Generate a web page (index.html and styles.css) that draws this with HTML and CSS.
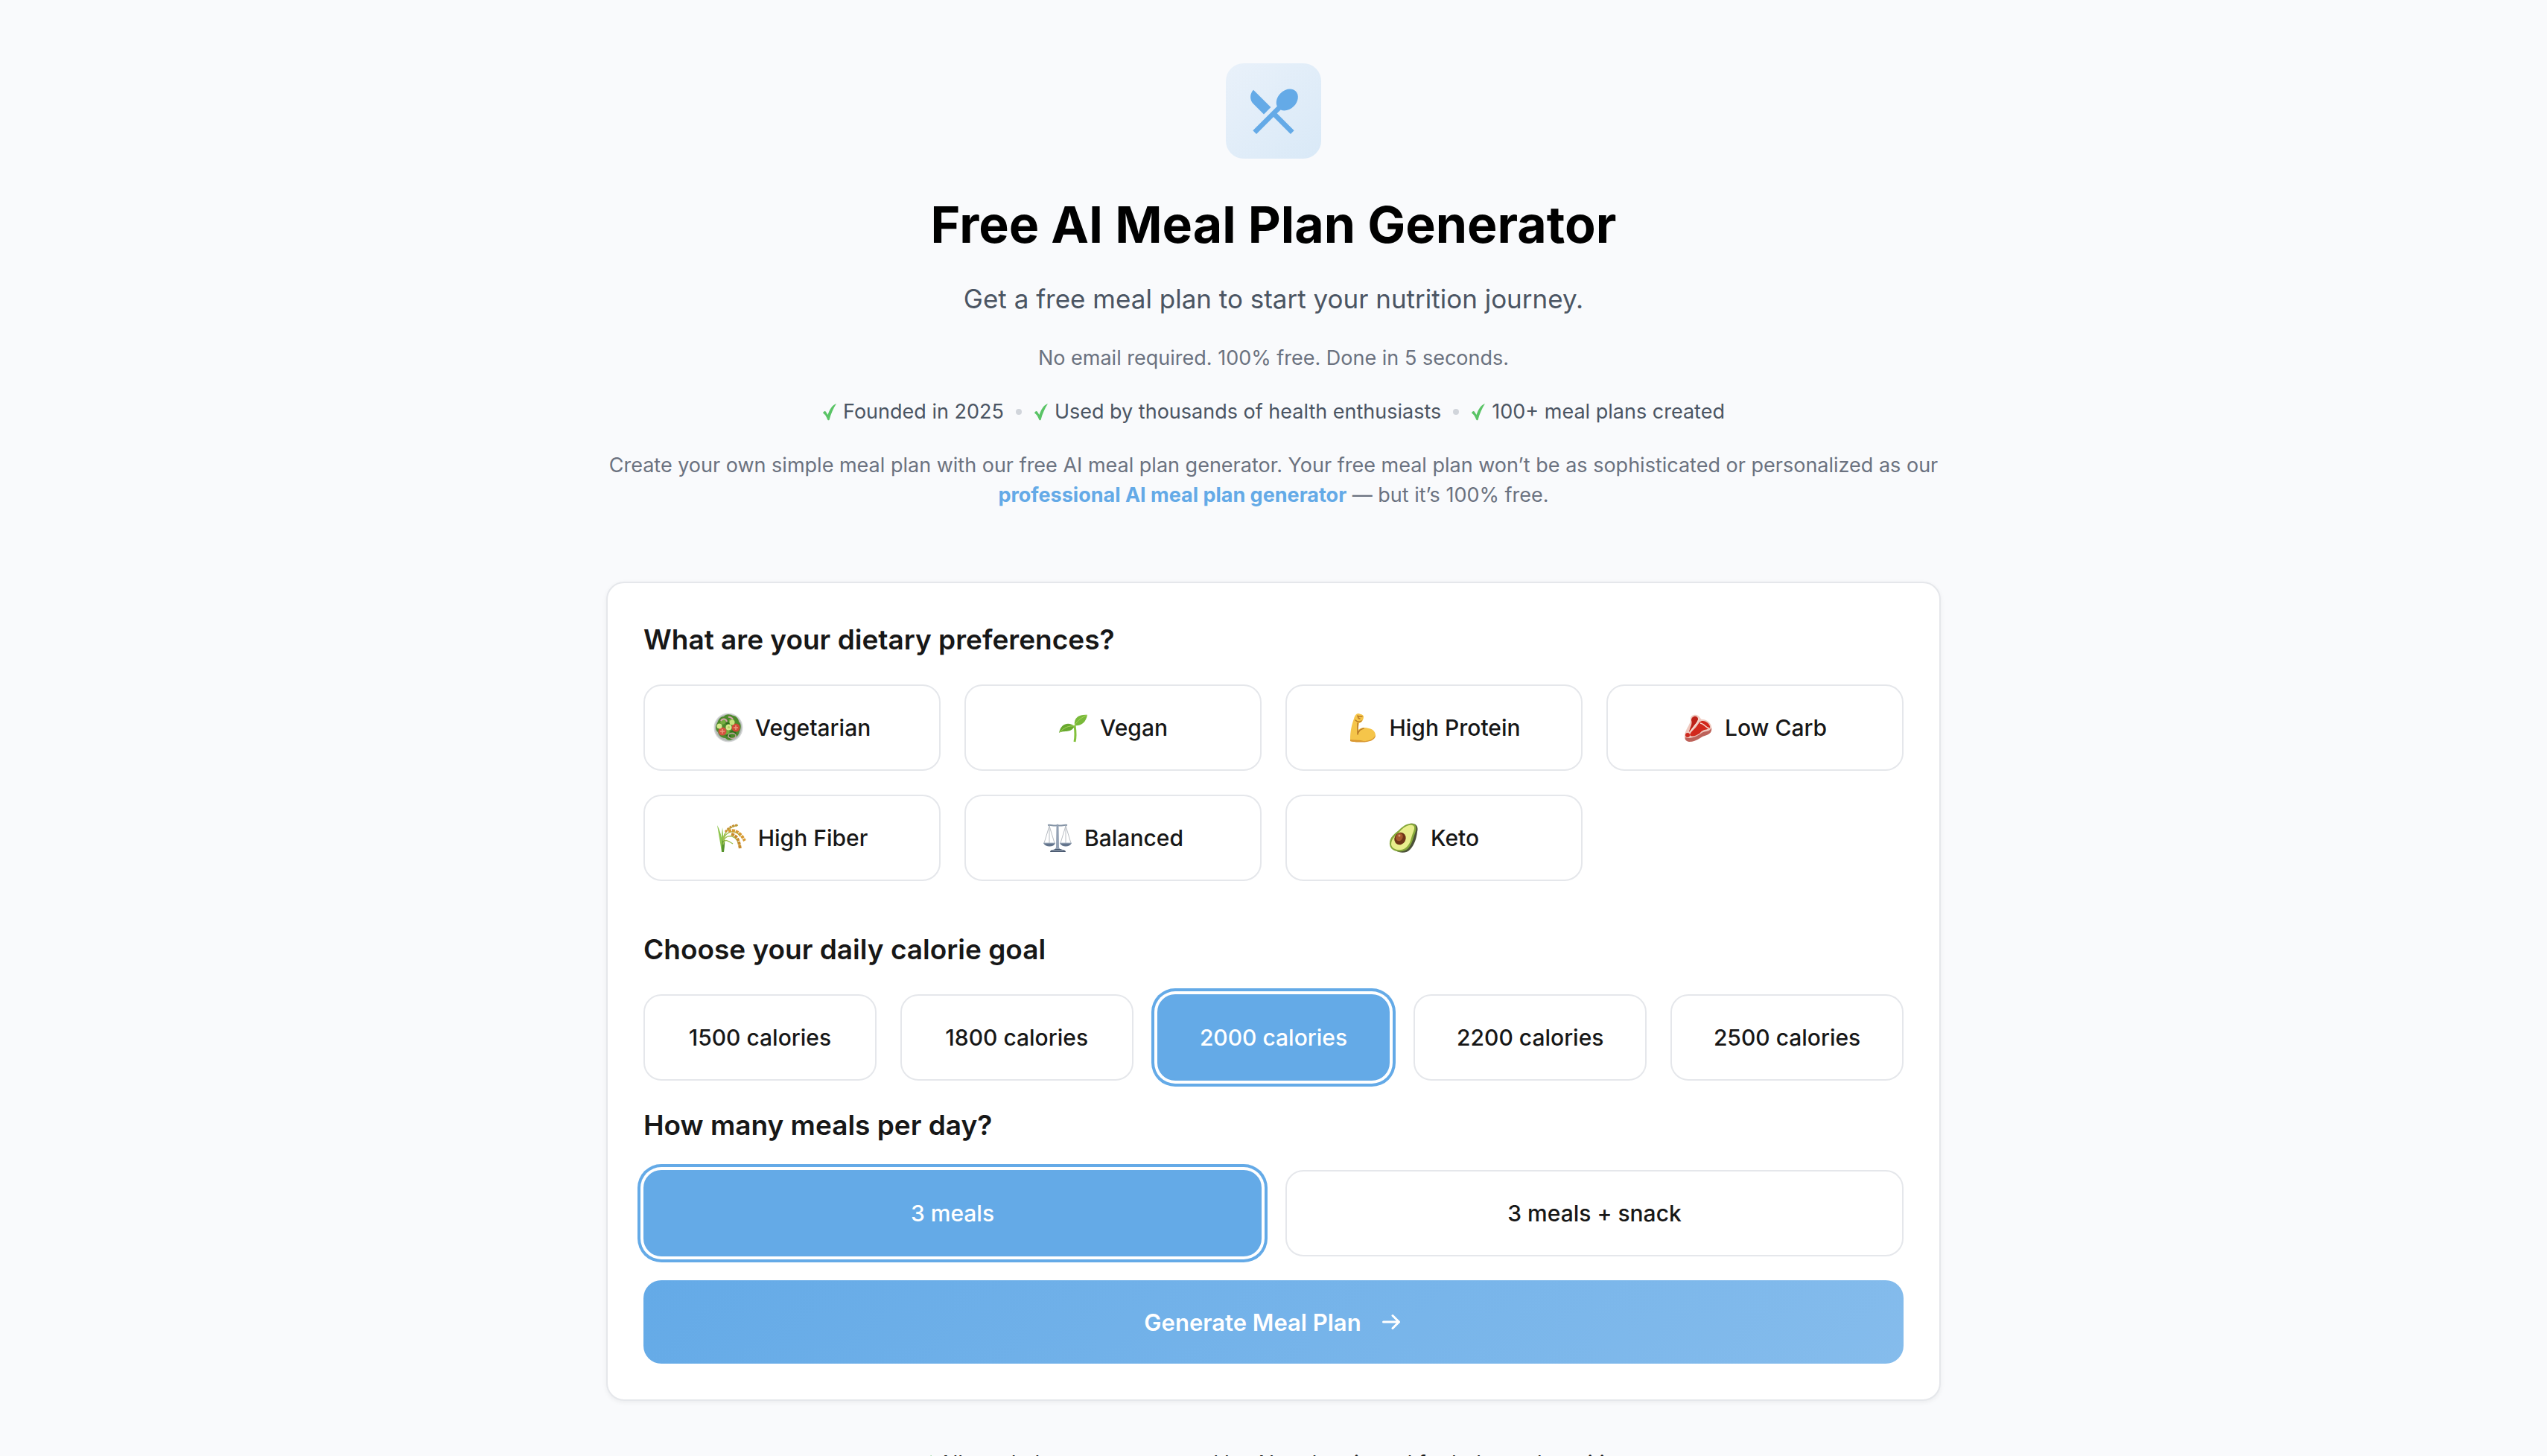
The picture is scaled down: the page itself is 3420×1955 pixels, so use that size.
FILE: index.html
```html
<!DOCTYPE html>
<html lang="en">
<head>
    <meta charset="UTF-8">
    <meta name="viewport" content="width=device-width, initial-scale=1.0">
    <title>Free AI Meal Plan Generator</title>
    <link rel="stylesheet" href="styles.css">
</head>
<body>
    <main class="container">
        <header class="hero">
            <div class="hero-icon">
                <svg viewBox="0 0 24 24" fill="currentColor" aria-hidden="true">
                    <path d="M8.1 13.34l2.83-2.83L3.91 3.5c-1.56 1.56-1.56 4.09 0 5.66l4.19 4.18zm6.78-1.81c1.53.71 3.68.21 5.27-1.38 1.91-1.91 2.28-4.65.81-6.12-1.46-1.46-4.2-1.1-6.12.81-1.59 1.59-2.09 3.74-1.38 5.27L3.7 19.87l1.41 1.41L12 14.41l6.88 6.88 1.41-1.41L13.41 13l1.47-1.47z"/>
                </svg>
            </div>
            <h1>Free AI Meal Plan Generator</h1>
            <p class="subtitle">Get a free meal plan to start your nutrition journey.</p>
            <p class="note">No email required. 100% free. Done in 5 seconds.</p>
            <ul class="trust">
                <li><svg class="tick" viewBox="0 0 20 24" aria-hidden="true"><path d="M1 13.500C2 11 4 10 5 12L7.500 16C10 9 13 3 19 1C15 7 12 14 9.500 23C8.500 23.500 7.500 23.500 7 22C5.500 18 3.500 15 1 13.500z"/></svg>Founded in 2025</li>
                <li class="dot"></li>
                <li><svg class="tick" viewBox="0 0 20 24" aria-hidden="true"><path d="M1 13.500C2 11 4 10 5 12L7.500 16C10 9 13 3 19 1C15 7 12 14 9.500 23C8.500 23.500 7.500 23.500 7 22C5.500 18 3.500 15 1 13.500z"/></svg>Used by thousands of health enthusiasts</li>
                <li class="dot"></li>
                <li><svg class="tick" viewBox="0 0 20 24" aria-hidden="true"><path d="M1 13.500C2 11 4 10 5 12L7.500 16C10 9 13 3 19 1C15 7 12 14 9.500 23C8.500 23.500 7.500 23.500 7 22C5.500 18 3.500 15 1 13.500z"/></svg>100+ meal plans created</li>
            </ul>
            <p class="note">Create your own simple meal plan with our free AI meal plan generator. Your free meal plan won’t be as sophisticated or personalized as our <a href="#">professional AI meal plan generator</a> — but it’s 100% free.</p>
        </header>

        <form class="card">
            <section class="diet">
                <h2>What are your dietary preferences?</h2>
                <div class="options four">
                    <button type="button" class="option">
                        <svg class="emoji" viewBox="0 0 40 40" aria-hidden="true">
                            <circle cx="20" cy="20" r="19.500" fill="#d3d5d6"/>
                            <circle cx="20" cy="20" r="18" fill="#b4bab6"/>
                            <path d="M5 14C7 8 10 5 14 5C17 1 23 2 26 4C31 4 34 9 34 12C38 15 37 22 35 25C34 31 30 33 27 34C24 38 18 37 16 34C10 34 7 30 6 26C2 23 3 17 5 14z" fill="#4d8a2b"/>
                            <path d="M9 12C13 6 18 10 16 14C13 17 9 16 9 12zM21 9C26 6 30 10 28 14C24 16 20 13 21 9zM14 22C20 19 24 25 20 29C15 31 11 26 14 22z" fill="#76ad3f"/>
                            <path d="M17 15C21 13 25 16 23 20M7 22C9 19 12 20 13 22M23 26C27 23 31 26 29 30M17 31C20 28 24 31 22 35" fill="none" stroke="#2f6b1d" stroke-width="2"/>
                            <path d="M10 11C12 7 17 8 18 12M20 6C22 5 25 7 26 9" fill="none" stroke="#d9a3ae" stroke-width="2"/>
                            <ellipse cx="25" cy="31" rx="5" ry="3.500" fill="none" stroke="#c3a5a0" stroke-width="1.500"/>
                            <circle cx="12" cy="25" r="5.500" fill="#d35440"/>
                            <circle cx="30" cy="20" r="5.500" fill="#cf4a38"/>
                            <path d="M12 22v6M9 25h6M30 17v6M27 20h6" stroke="#ec9a7c" stroke-width="1.500"/>
                            <circle cx="8" cy="18" r="3.500" fill="#d6e98f"/>
                            <circle cx="20.500" cy="19.500" r="4" fill="#d6e98f"/>
                            <circle cx="25" cy="13" r="3.500" fill="#c9e27c"/>
                            <circle cx="20.500" cy="19.500" r="1.500" fill="#b2d263"/>
                        </svg>
                        Vegetarian
                    </button>
                    <button type="button" class="option">
                        <svg class="emoji" viewBox="0 0 40 40" aria-hidden="true">
                            <path d="M22 17C23 24 24 30 22 39" fill="none" stroke="#83c13c" stroke-width="3"/>
                            <path d="M22 18C16 13 4 12 1 27C8 23 17 28 22 18z" fill="#69a92f"/>
                            <path d="M22 17C20 6 30 2 39 3C37 13 31 18 22 17z" fill="#79b93a"/>
                            <path d="M2 26C8 20 14 17 22 18M22 17C26 10 32 6 39 3" fill="none" stroke="#a9d65c" stroke-width="1"/>
                        </svg>
                        Vegan
                    </button>
                    <button type="button" class="option">
                        <svg class="emoji" viewBox="0 0 40 40" aria-hidden="true">
                            <path d="M4 36C4 25 6 16 9 8C10 4 12 1 15 1C18 2 21 2 22 5C22 9 20 13 16 14L14 24C17 20 23 19 29 21C35 22 38 26 38 31C36 37 29 39 20 39C13 39 7 39 4 38z" fill="#f5c54a"/>
                            <path d="M4 36C11 37 17 36 22 38C29 38 35 36 38 30C38 37 29 39.500 20 39.500C13 39.500 7 39.500 4 38z" fill="#d99731"/>
                            <path d="M14 14L14 29M14 29C15 25 18 22 22 21M11 10C13 12 16 13 19 11M14 4C15 6 14 8 17 8M15 5H20" fill="none" stroke="#b87825" stroke-width="1.500" stroke-linecap="round"/>
                        </svg>
                        High Protein
                    </button>
                    <button type="button" class="option">
                        <svg class="emoji" viewBox="0 0 40 40" aria-hidden="true">
                            <path d="M2 30C4 20 10 16 10 9C9 5 14 2 18 3C22 4 23 8 25 9C31 8 38 14 38 19C39 25 36 29 29 30C22 32 19 39 8 39C4 38 1 36 2 30z" fill="#efc9bf"/>
                            <path d="M3 33C10 36 20 31 25 27C30 24 36 26 38 20C39 26 36 29 29 31C22 33 19 39 8 39C4 38 2 36 3 33z" fill="#bd625a"/>
                            <path d="M11 10C11 6 16 3 19 6C22 9 18 14 15 17C13 20 11 23 8 26C9 20 13 15 11 10z" fill="#bd2119"/>
                            <path d="M25 11C31 10 37 16 36 20C32 24 27 21 22 28C17 31 12 33 9 30C10 25 16 22 19 17C21 14 22 12 25 11z" fill="#d1281d"/>
                            <path d="M21 7C22 12 14 18 10 25M23 14C29 15 30 20 35 21" fill="none" stroke="#f7dad0" stroke-width="1.500"/>
                            <ellipse cx="6" cy="30" rx="3" ry="3" fill="#cd2a20"/>
                        </svg>
                        Low Carb
                    </button>
                    <button type="button" class="option">
                        <svg class="emoji" viewBox="0 0 40 40" aria-hidden="true">
                            <path d="M7 39C5 26 3 15 1 3C7 14 8 24 9 39zM7 39C6 28 7 16 8 6C10 18 9 29 9 39z" fill="#8fc54f"/>
                            <path d="M7 39C7 28 8 23 10 18C12 24 11 32 10 39z" fill="#57942e"/>
                            <path d="M9 29C10 20 16 24 22 28M9 22C11 10 18 5 29 3M9 23C13 10 26 8 32 18M9 24C14 14 28 15 32 34" fill="none" stroke="#9fbf4f" stroke-width="1.500"/>
                            <path d="M12 12C17 6 22 3 29 3" fill="none" stroke="#c99134" stroke-width="3" stroke-dasharray="3 1"/>
                            <path d="M16 11C26 8 33 14 38 24" fill="none" stroke="#d79a32" stroke-width="4" stroke-dasharray="4 1"/>
                            <path d="M20 15C28 17 30 23 32 35" fill="none" stroke="#c88b2c" stroke-width="4" stroke-dasharray="4 1"/>
                        </svg>
                        High Fiber
                    </button>
                    <button type="button" class="option">
                        <svg class="emoji" viewBox="0 0 40 40" aria-hidden="true">
                            <path d="M7 3C12 2 15 5 20 3C25 5 28 2 33 3" fill="none" stroke="#8493a5" stroke-width="2"/>
                            <path d="M20 1L21.500 5L22 33L24 36H16L18 33L18.500 5z" fill="#93a1b4"/>
                            <path d="M9 4L2 27M9 4L16 27M31 4L24 27M31 4L38 27M9 4V27M31 4V27" fill="none" stroke="#b8bdc3" stroke-width="1"/>
                            <path d="M1 27H17C15 33 4 33 1 27zM23 27H39C36 33 26 33 23 27z" fill="#63748c"/>
                            <path d="M1 27H17M23 27H39" stroke="#a9b5c4" stroke-width="1"/>
                            <path d="M10 39C10 36 15 36 17 35H24C26 36 31 36 31 39z" fill="#46566d"/>
                            <path d="M13 37H28" stroke="#aab6c6" stroke-width="1"/>
                        </svg>
                        Balanced
                    </button>
                    <button type="button" class="option">
                        <svg class="emoji" viewBox="0 0 40 40" aria-hidden="true">
                            <path d="M28 1C36 0 40 4 38 12C37 21 34 29 29 35C24 41 15 41 9 37z" fill="#4b5138"/>
                            <path d="M1 29C0 20 7 15 13 10C19 4 25 0 32 1C38 2 37 9 35 14C32 22 31 29 25 35C17 41 2 39 1 29z" fill="#86a83a"/>
                            <path d="M3 29C3 21 9 17 15 11C20 6 25 2 31 3C36 4 34 9 32 14C29 22 29 28 23 33C16 39 4 36 3 29z" fill="#e8ee8c"/>
                            <ellipse cx="15" cy="21" rx="7.500" ry="8.500" transform="rotate(28 15 21)" fill="#6e3517"/>
                            <ellipse cx="14" cy="19" rx="4.500" ry="5.500" transform="rotate(28 14 19)" fill="#a65a2d"/>
                            <circle cx="14" cy="17" r="1.500" fill="#d79a73"/>
                        </svg>
                        Keto
                    </button>
                </div>
            </section>

            <section>
                <h2>Choose your daily calorie goal</h2>
                <div class="options five">
                    <button type="button" class="option">1500 calories</button>
                    <button type="button" class="option">1800 calories</button>
                    <button type="button" class="option selected" aria-pressed="true">2000 calories</button>
                    <button type="button" class="option">2200 calories</button>
                    <button type="button" class="option">2500 calories</button>
                </div>
            </section>

            <section>
                <h2>How many meals per day?</h2>
                <div class="options two">
                    <button type="button" class="option selected" aria-pressed="true">3 meals</button>
                    <button type="button" class="option">3 meals + snack</button>
                </div>
            </section>

            <button type="submit" class="generate">
                Generate Meal Plan
                <svg viewBox="0 0 32 32" aria-hidden="true"><path d="M5.500 16h21M18 7.500l8.500 8.500l-8.500 8.500"/></svg>
            </button>
        </form>

        <p class="footnote"><svg class="tick" viewBox="0 0 20 24" aria-hidden="true"><path d="M1 13.500C2 11 4 10 5 12L7.500 16C10 9 13 3 19 1C15 7 12 14 9.500 23C8.500 23.500 7.500 23.500 7 22C5.500 18 3.500 15 1 13.500z"/></svg>All meal plans are generated by AI and reviewed for balanced nutrition</p>
    </main>
</body>
</html>
```
FILE: styles.css
```css
* {
    box-sizing: border-box;
}

body {
    margin: 0;
    background: #f9fafc;
    color: #171717;
    font-family: Inter, "Noto Sans", sans-serif;
    font-size: 27px;
    line-height: 40px;
}

h1, h2, p, ul {
    margin: 0;
}

.container {
    max-width: 1792px;
    margin: 0 auto;
    padding-top: 85px;
}

.hero {
    display: flex;
    flex-direction: column;
    align-items: center;
    gap: 32px;
    margin-bottom: 96px;
    text-align: center;
}

.hero-icon {
    display: flex;
    align-items: center;
    justify-content: center;
    width: 128px;
    height: 128px;
    margin-bottom: 16px;
    border-radius: 24px;
    background: linear-gradient(135deg, #e9f1fa, #d9e9f7);
    color: #64aae7;
}

.hero-icon svg {
    width: 80px;
    height: 80px;
}

h1 {
    color: #000;
    font-size: 68px;
    font-weight: 700;
    line-height: 80px;
}

.subtitle {
    color: #4b5563;
    font-size: 35px;
    line-height: 56px;
}

.note {
    color: #6b7280;
}

.note a {
    color: #64aae7;
    font-weight: 700;
    text-decoration: none;
}

.trust {
    display: flex;
    align-items: center;
    gap: 16px;
    padding: 0;
    color: #4b5563;
    list-style: none;
}

.trust li {
    display: flex;
    align-items: center;
}

.trust .dot {
    width: 8px;
    height: 8px;
    border-radius: 50%;
    background: #d1d5db;
}

.tick {
    width: 20px;
    height: 24px;
    margin-right: 8px;
    fill: #5ac466;
}

.card {
    display: flex;
    flex-direction: column;
    gap: 32px;
    padding: 48px;
    border: 2px solid #e5e7eb;
    border-radius: 24px;
    background: #fff;
    box-shadow: 0 2px 6px rgba(0, 0, 0, 0.06);
}

.diet {
    margin-bottom: 32px;
}

h2 {
    margin-bottom: 32px;
    font-size: 37px;
    font-weight: 600;
    line-height: 56px;
}

.options {
    display: grid;
    gap: 32px;
}

.four {
    grid-template-columns: repeat(4, 1fr);
}

.five {
    grid-template-columns: repeat(5, 1fr);
}

.two {
    grid-template-columns: repeat(2, 1fr);
}

button {
    display: flex;
    align-items: center;
    justify-content: center;
    border-radius: 24px;
    font-family: inherit;
    cursor: pointer;
}

.option {
    gap: 16px;
    height: 116px;
    padding: 0;
    border: 2px solid #e5e7eb;
    background: #fff;
    color: #171717;
    font-size: 30px;
    font-weight: 500;
}

.selected {
    border-color: #64aae7;
    background: #64aae7;
    color: #fff;
    box-shadow: 0 0 0 4px #fff, 0 0 0 8px #64aae7;
}

.emoji {
    width: 40px;
    height: 40px;
}

.generate {
    gap: 24px;
    height: 112px;
    border: 0;
    background: linear-gradient(135deg, #64aae7, #85bcec);
    color: #fff;
    font-size: 31px;
    font-weight: 600;
}

.generate svg {
    width: 32px;
    height: 32px;
    fill: none;
    stroke: #fff;
    stroke-width: 3;
    stroke-linecap: round;
    stroke-linejoin: round;
}

.footnote {
    display: flex;
    align-items: center;
    justify-content: center;
    padding: 64px 0;
    color: #171717;
    font-size: 28px;
}
```
